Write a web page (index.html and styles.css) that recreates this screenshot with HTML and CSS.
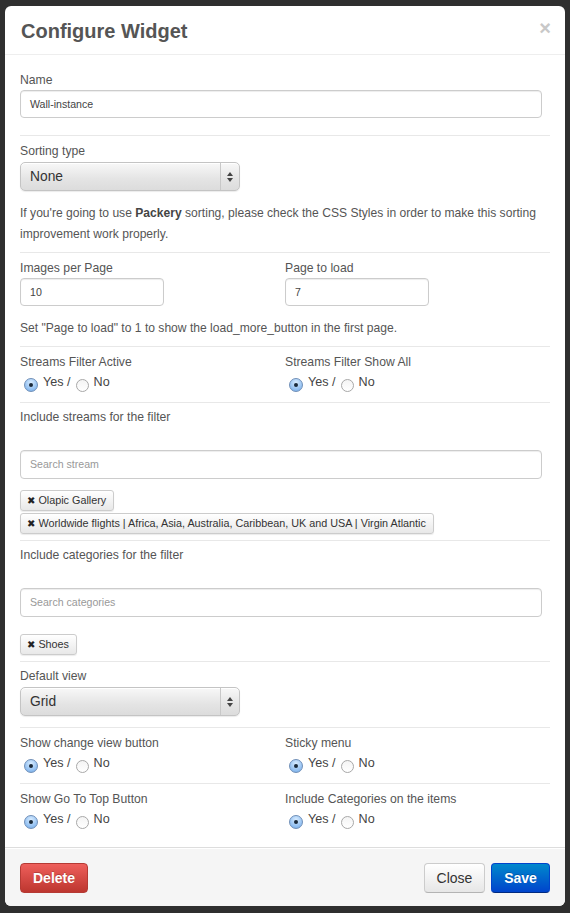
FILE: index.html
```html
<!DOCTYPE html>
<html>
<head>
<meta charset="utf-8">
<link rel="stylesheet" href="styles.css">
</head>
<body>
<div class="modal">
  <div class="modal-header">
    <h3 class="title">Configure Widget</h3>
    <span class="close">&times;</span>
  </div>
  <div class="modal-body">
    <div class="section s-name">
      <div class="label">Name</div>
      <div class="input wide">Wall-instance</div>
    </div>
    <div class="section s-sort">
      <div class="label">Sorting type</div>
      <div class="select"><span class="select-text">None</span><span class="select-btn"><span class="arr-up"></span><span class="arr-down"></span></span></div>
      <p class="help help-two">If you're going to use <b>Packery</b> sorting, please check the CSS Styles in order to make this sorting improvement work properly.</p>
    </div>
    <div class="section s-pages">
      <div class="cols">
        <div class="col">
          <div class="label">Images per Page</div>
          <div class="input small">10</div>
        </div>
        <div class="col">
          <div class="label">Page to load</div>
          <div class="input small">7</div>
        </div>
      </div>
      <p class="help">Set "Page to load" to 1 to show the load_more_button in the first page.</p>
    </div>
    <div class="section s-radio">
      <div class="cols">
        <div class="col">
          <div class="label">Streams Filter Active</div>
          <div class="radios"><span class="radio on"></span><span class="rtext">Yes /</span><span class="radio"></span><span class="rtext">No</span></div>
        </div>
        <div class="col">
          <div class="label">Streams Filter Show All</div>
          <div class="radios"><span class="radio on"></span><span class="rtext">Yes /</span><span class="radio"></span><span class="rtext">No</span></div>
        </div>
      </div>
    </div>
    <div class="section s-streams">
      <div class="label">Include streams for the filter</div>
      <div class="input wide search placeholder">Search stream</div>
      <div class="tags">
        <span class="tag"><span class="tag-x">&#10006;</span>Olapic Gallery</span>
        <span class="tag"><span class="tag-x">&#10006;</span>Worldwide flights | Africa, Asia, Australia, Caribbean, UK and USA | Virgin Atlantic</span>
      </div>
    </div>
    <div class="section s-cats">
      <div class="label">Include categories for the filter</div>
      <div class="input wide search placeholder">Search categories</div>
      <div class="tags tags-cat">
        <span class="tag"><span class="tag-x">&#10006;</span>Shoes</span>
      </div>
    </div>
    <div class="section s-view">
      <div class="label">Default view</div>
      <div class="select"><span class="select-text">Grid</span><span class="select-btn"><span class="arr-up"></span><span class="arr-down"></span></span></div>
    </div>
    <div class="section s-radio">
      <div class="cols">
        <div class="col">
          <div class="label">Show change view button</div>
          <div class="radios"><span class="radio on"></span><span class="rtext">Yes /</span><span class="radio"></span><span class="rtext">No</span></div>
        </div>
        <div class="col">
          <div class="label">Sticky menu</div>
          <div class="radios"><span class="radio on"></span><span class="rtext">Yes /</span><span class="radio"></span><span class="rtext">No</span></div>
        </div>
      </div>
    </div>
    <div class="section s-last">
      <div class="cols">
        <div class="col">
          <div class="label">Show Go To Top Button</div>
          <div class="radios"><span class="radio on"></span><span class="rtext">Yes /</span><span class="radio"></span><span class="rtext">No</span></div>
        </div>
        <div class="col">
          <div class="label">Include Categories on the items</div>
          <div class="radios"><span class="radio on"></span><span class="rtext">Yes /</span><span class="radio"></span><span class="rtext">No</span></div>
        </div>
      </div>
    </div>
  </div>
  <div class="modal-footer">
    <span class="btn btn-danger">Delete</span>
    <span class="spacer"></span>
    <span class="btn btn-default">Close</span>
    <span class="btn btn-primary">Save</span>
  </div>
</div>
</body>
</html>
```

FILE: styles.css
```css
html, body {
  margin: 0;
  padding: 0;
}
body {
  background: #2f2f2f;
  font-family: "Liberation Sans", Arial, Helvetica, sans-serif;
  color: #555;
  font-size: 12px;
  width: 570px;
  height: 913px;
  overflow: hidden;
}
.modal {
  margin: 6px 0 0 5px;
  width: 560px;
  height: 900px;
  background: #fff;
  border-radius: 6px;
  display: flex;
  flex-direction: column;
  overflow: hidden;
}
.modal-header {
  height: 48px;
  border-bottom: 1px solid #eee;
  display: flex;
  align-items: center;
  justify-content: space-between;
  padding: 0 16px;
  box-sizing: content-box;
}
.title {
  margin: 0;
  font-size: 20px;
  font-weight: bold;
  color: #555;
  line-height: 30px;
  padding-top: 2px;
}
.close {
  color: #c8c8c8;
  font-size: 20px;
  font-weight: bold;
  line-height: 20px;
  margin-top: -4px;
  margin-right: -2px;
}
.modal-body {
  padding: 15px 15px 0;
  flex: 1;
}
.section {
  border-bottom: 1px solid #e8e8e8;
}
.label {
  line-height: 20px;
  height: 20px;
  color: #555;
  font-size: 12.2px;
}
.input {
  box-sizing: border-box;
  height: 28px;
  border: 1px solid #ccc;
  border-radius: 4px;
  box-shadow: inset 0 1px 1px rgba(0,0,0,0.075);
  padding: 0 9px;
  line-height: 26px;
  font-size: 10.6px;
  color: #444;
  background: #fff;
}
.input.wide { width: 522px; }
.input.small { width: 144px; }
.placeholder { color: #999; }
.input.search { height: 29px; line-height: 27px; }

.s-name { padding-bottom: 17px; }
.s-sort { padding-top: 5px; padding-bottom: 7px; }
.s-pages { padding-top: 5px; padding-bottom: 7px; }
.s-radio { padding-top: 5px; padding-bottom: 9px; }
.s-streams { padding-top: 4px; padding-bottom: 6px; }
.s-cats { padding-top: 4px; padding-bottom: 6px; }
.s-view { padding-top: 4px; padding-bottom: 11px; }
.s-last { padding-top: 5px; padding-bottom: 16px; border-bottom: none; }

.s-sort .label, .s-view .label { height: 21px; }

.select {
  box-sizing: border-box;
  width: 220px;
  height: 29px;
  border: 1px solid #c4c4c4;
  border-radius: 5px;
  background: linear-gradient(#f8f8f8, #e4e4e4 60%, #dcdcdc);
  box-shadow: inset 0 1px 0 #fff, 0 1px 1px rgba(0,0,0,0.08);
  display: flex;
  align-items: center;
}
.select-text {
  flex: 1;
  padding-left: 9px;
  font-size: 13.8px;
  color: #333;
  line-height: 27px;
}
.select-btn {
  width: 18px;
  height: 27px;
  border-left: 1px solid #c8c8c8;
  display: flex;
  flex-direction: column;
  align-items: center;
  justify-content: center;
  gap: 2px;
}
.arr-up, .arr-down {
  width: 0;
  height: 0;
  border-left: 3px solid transparent;
  border-right: 3px solid transparent;
}
.arr-up { border-bottom: 4px solid #444; }
.arr-down { border-top: 4px solid #444; }

.help {
  margin: 12px 0 0;
  line-height: 21px;
  color: #555;
  font-size: 12.1px;
}
.help b { color: #444; }

.cols {
  display: flex;
}
.col {
  width: 265px;
}
.radios {
  display: flex;
  align-items: center;
  height: 21px;
}
.radio {
  box-sizing: border-box;
  width: 13px;
  height: 13px;
  border-radius: 50%;
  border: 1px solid #a8a8a8;
  background: linear-gradient(#f4f4f4, #fff);
  margin-top: 5px;
  position: relative;
}
.radio.on {
  width: 14px;
  height: 14px;
  border-color: #6f8fb8;
  background: radial-gradient(circle at 50% 30%, #d8ecff, #8ebdf0 70%, #6fa5e0);
  margin-left: 4px;
}
.radio.on::after {
  content: "";
  position: absolute;
  width: 4px;
  height: 4px;
  border-radius: 50%;
  background: #1a2a3a;
  left: 4px;
  top: 4px;
}
.rtext {
  font-size: 12.6px;
  color: #444;
  margin-left: 5px;
  margin-right: 5px;
  margin-top: -2px;
}

.s-streams .input, .s-cats .input { margin-top: 23px; }
.tags {
  margin-top: 11px;
  display: flex;
  flex-direction: column;
  align-items: flex-start;
  gap: 2px;
}
.tags-cat { margin-top: 17px; }
.tag {
  box-sizing: border-box;
  height: 21px;
  line-height: 19px;
  border: 1px solid #ccc;
  border-radius: 3px;
  background: linear-gradient(#fff, #e8e8e8);
  box-shadow: 0 1px 1px rgba(0,0,0,0.08);
  padding: 0 7px 0 6px;
  font-size: 10.8px;
  color: #333;
  white-space: nowrap;
}
.tag-x {
  font-family: "DejaVu Sans", sans-serif;
  font-size: 10px;
  color: #222;
  margin-right: 3px;
}

.modal-footer {
  box-sizing: border-box;
  height: 59px;
  border-top: 1px solid #ddd;
  background: #f5f5f5;
  box-shadow: inset 0 1px 0 #fff;
  display: flex;
  align-items: center;
  padding: 0 15px;
  gap: 6px;
}
.spacer { flex: 1; }
.btn {
  box-sizing: border-box;
  height: 30px;
  line-height: 28px;
  border-radius: 4px;
  font-size: 14px;
  padding: 0 8px;
  border: 1px solid;
  margin-top: 1px;
}
.btn-danger {
  width: 68px;
  text-align: center;
  color: #fff;
  font-weight: bold;
  background: linear-gradient(#ee5f5b, #bd362f);
  border-color: #b53a34;
  text-shadow: 0 -1px 0 rgba(0,0,0,0.2);
}
.btn-default {
  width: 61px;
  text-align: center;
  color: #333;
  background: linear-gradient(#fff, #e6e6e6);
  border-color: #ccc #ccc #b3b3b3;
  margin-right: 0;
}
.btn-primary {
  width: 59px;
  text-align: center;
  color: #fff;
  font-weight: bold;
  background: linear-gradient(#0088cc, #0044cc);
  border-color: #0044cc #0044cc #002a80;
  text-shadow: 0 -1px 0 rgba(0,0,0,0.2);
}
```
